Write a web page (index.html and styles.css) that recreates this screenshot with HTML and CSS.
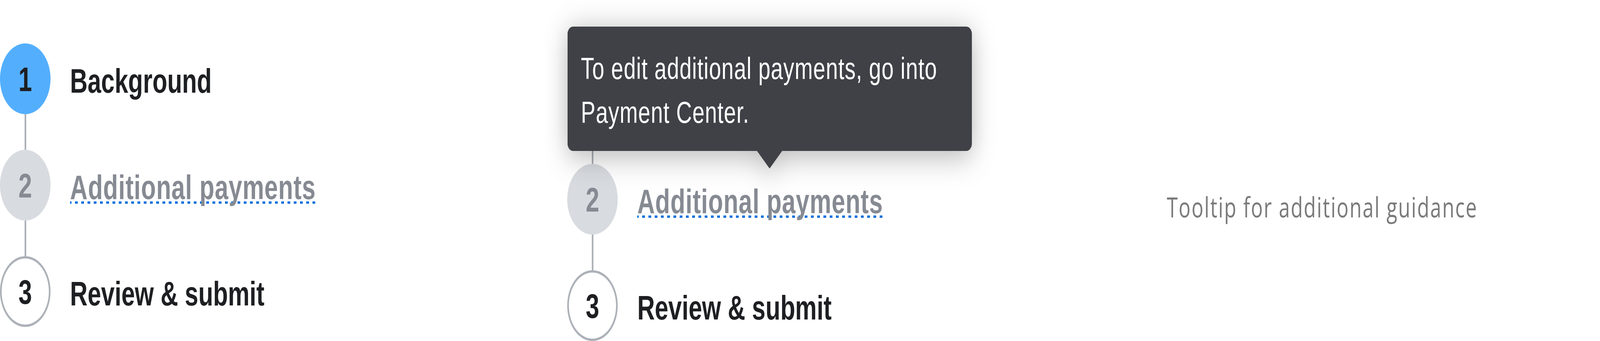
FILE: index.html
```html
<!DOCTYPE html>
<html lang="en">
<head>
<meta charset="utf-8">
<title>Stepper with tooltip</title>
<link rel="stylesheet" href="styles.css">
</head>
<body>
<div class="viewport">
<main class="page" id="page">
  <section class="col col-first">
    <ol class="stepper">
      <li class="step step-active">
        <span class="badge">1</span>
        <span class="label">Background</span>
      </li>
      <li class="connector" aria-hidden="true"></li>
      <li class="step step-disabled">
        <span class="badge">2</span>
        <span class="label label-hint">Additional payments</span>
      </li>
      <li class="connector" aria-hidden="true"></li>
      <li class="step step-todo">
        <span class="badge">3</span>
        <span class="label">Review &amp; submit</span>
      </li>
    </ol>
  </section>

  <section class="col col-second">
    <ol class="stepper">
      <li class="step step-active step-covered" aria-hidden="true">
        <span class="badge">1</span>
        <span class="label">Background</span>
      </li>
      <li class="connector" aria-hidden="true"></li>
      <li class="step step-disabled">
        <span class="badge">2</span>
        <span class="label label-hint">Additional payments</span>
      </li>
      <li class="connector" aria-hidden="true"></li>
      <li class="step step-todo">
        <span class="badge">3</span>
        <span class="label">Review &amp; submit</span>
      </li>
    </ol>
    <div class="tooltip" role="tooltip">To edit additional payments, go into Payment Center.</div>
  </section>

  <section class="col col-third">
    <p class="caption">Tooltip for additional guidance</p>
  </section>
</main>
</div>
<script src="app.js"></script>
</body>
</html>
```

FILE: styles.css
```css
:root {
  --sx: 1;
}

@media (max-width: 5731px) {
  :root {
    --sx: 0.714585;
  }
}

html, body {
  margin: 0;
  padding: 0;
  background: #ffffff;
  overflow: hidden;
}

.viewport {
  width: 100%;
  height: 872px;
  overflow: hidden;
}

/* The composition is authored on a 5732px-wide canvas and fitted to the
   actual viewport width. */
.page {
  display: grid;
  grid-template-columns: 2032px 2148px 1552px;
  align-items: start;
  width: 5732px;
  height: 872px;
  transform: scaleX(var(--sx));
  transform-origin: 0 0;
}

.col-first {
  padding-top: 111px;
}

.col-second {
  position: relative;
  padding-top: 147px;
}

.col-third {
  padding-top: 480px;
}

.stepper {
  list-style: none;
  margin: 0;
  padding: 0;
  display: flex;
  flex-direction: column;
}

.step {
  display: flex;
  align-items: center;
  gap: 70px;
  height: 181px;
  font-family: "Liberation Sans", Arial, sans-serif;
  font-weight: 700;
  font-size: 87px;
}

.step-covered {
  visibility: hidden;
}

.badge {
  box-sizing: border-box;
  flex: none;
  width: 181px;
  height: 181px;
  border-radius: 50%;
  display: flex;
  align-items: center;
  justify-content: center;
  line-height: 87px;
  padding-top: 2px;
}

.label {
  display: inline-block;
  line-height: 87px;
  padding-top: 9px;
  white-space: nowrap;
  color: #1e1f22;
}

.step-active .badge {
  background: #53affe;
  color: #1e1f22;
}

.step-disabled .badge {
  background: #d8dbe0;
  color: #868a92;
}

.step-disabled .label {
  color: #868a92;
}

.step-todo .badge {
  background: #ffffff;
  border: 6px solid #adb1b8;
  color: #1e1f22;
}

.label-hint {
  letter-spacing: 1.3px;
  background-image: repeating-linear-gradient(
    to right,
    #0070dd 0 5.3px,
    transparent 5.3px 17px,
    #0070dd 17px 22.4px
  );
  background-repeat: no-repeat;
  background-size: 100% 6px;
  background-position: left 0 top 89px;
}

.connector {
  width: 6px;
  height: 91px;
  margin-left: 87.5px;
  background: #adb1b8;
}

.tooltip {
  position: absolute;
  top: 68px;
  left: 1px;
  box-sizing: border-box;
  width: 1449px;
  padding: 51px 48px 43px;
  background: #404147;
  color: #ffffff;
  border-radius: 20px;
  font-family: "Liberation Sans", Arial, sans-serif;
  font-weight: 400;
  font-size: 78px;
  line-height: 112px;
  letter-spacing: 1.5px;
  filter: drop-shadow(0 12px 40px rgba(0, 0, 0, 0.3));
}

.tooltip::after {
  content: "";
  position: absolute;
  top: 100%;
  left: 679px;
  width: 0;
  height: 0;
  border-left: 45px solid transparent;
  border-right: 45px solid transparent;
  border-top: 45px solid #404147;
}

.caption {
  margin: 0;
  font-family: "Open Sans", "Noto Sans", sans-serif;
  font-weight: 400;
  font-size: 71px;
  letter-spacing: 3.3px;
  color: #7a7a7a;
  white-space: nowrap;
}
```

FILE: app.js
```js
(function () {
  var root = document.documentElement;
  function fit() {
    var sx = Math.min(1, window.innerWidth / 5732);
    root.style.setProperty('--sx', String(sx));
  }
  fit();
  window.addEventListener('resize', fit);
})();
```
